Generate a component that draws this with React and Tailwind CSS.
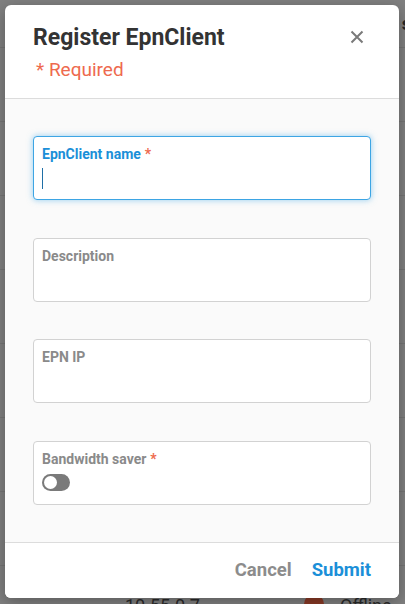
import { useState } from "react";

const rows = [0, 1, 2, 3, 4, 5, 6, 7];

const Field = ({ label, required, focused, children }) => (
  <div
    className={
      "relative flex h-[64px] flex-col rounded-[4px] border bg-white px-[8px] pt-[9px] " +
      (focused
        ? "border-[#3da5e4] shadow-[0_0_6px_rgba(61,165,228,0.55)]"
        : "border-[#d2d2d2]")
    }
  >
    <label
      className={
        "text-[14px] leading-[16px] font-bold " +
        (focused ? "text-[#1b8fd8]" : "text-[#8a8a8a]")
      }
    >
      {label}
      {required && <span className="ml-[4px] text-[#ee6a4e]">*</span>}
    </label>
    {children}
  </div>
);

const App = () => {
  const [name, setName] = useState("");
  const [desc, setDesc] = useState("");
  const [ip, setIp] = useState("");
  const [saver, setSaver] = useState(false);

  return (
    <div className="relative h-[604px] w-[405px] overflow-hidden bg-[#808080] font-['Roboto',_'Liberation_Sans',_sans-serif]">
      {/* page behind the overlay */}
      <div className="flex h-[48px] items-start justify-end border-b border-[#757575] pt-[10px]">
        <span className="mr-[-6px] text-[18px] font-bold text-[#262626]">s</span>
      </div>
      {rows.map((r) => (
        <div key={r} className="h-[74px] border-b border-[#757575]" />
      ))}
      <div className="absolute left-[125px] top-[592px] text-[18px] text-[#2b2b2b]">10.55.0.7</div>
      <div className="absolute left-[304px] top-[594px] h-[20px] w-[20px] rounded-full bg-[#8a3a26]" />
      <div className="absolute left-[340px] top-[592px] text-[18px] text-[#2b2b2b]">Offline</div>

      {/* dialog */}
      <div className="absolute left-[5px] top-[5px] flex h-[593px] w-[394px] flex-col overflow-hidden rounded-[6px] bg-white shadow-[0_4px_16px_rgba(0,0,0,0.3)]">
        <div className="flex h-[94px] shrink-0 flex-col border-b border-[#dcdcdc] px-[28px] pt-[18px]">
          <div className="flex items-start justify-between">
            <h2 className="text-[23px] leading-[30px] font-bold text-[#333333]">Register EpnClient</h2>
            <button className="mr-[7px] mt-[7px] text-[#7a7a7a]">
              <svg width="14" height="14" viewBox="0 0 14 14">
                <path d="M1.5 1.5L12.5 12.5M12.5 1.5L1.5 12.5" stroke="currentColor" strokeWidth="2" />
              </svg>
            </button>
          </div>
          <p className="mt-[6px] pl-[3px] text-[19px] leading-[22px] text-[#ee6a4e]">* Required</p>
        </div>

        <div className="flex flex-1 flex-col gap-[37.5px] bg-[#fafafa] px-[28px] pt-[37px]">
          <Field label="EpnClient name" required focused>
            <div className="mt-[6px] flex h-[21px] items-center">
              <span className="h-[21px] w-px shrink-0 bg-[#1f6fa6]" />
              <input
                value={name}
                onChange={(e) => setName(e.target.value)}
                className="h-[21px] w-full bg-transparent text-[15px] text-[#333] caret-[#1b6fa8] outline-none"
              />
            </div>
          </Field>
          <Field label="Description">
            <input
              value={desc}
              onChange={(e) => setDesc(e.target.value)}
              className="mt-[6px] h-[21px] w-full bg-transparent text-[15px] text-[#333] outline-none"
            />
          </Field>
          <Field label="EPN IP">
            <input
              value={ip}
              onChange={(e) => setIp(e.target.value)}
              className="mt-[6px] h-[21px] w-full bg-transparent text-[15px] text-[#333] outline-none"
            />
          </Field>
          <Field label="Bandwidth saver" required>
            <button
              onClick={() => setSaver(!saver)}
              className={
                "mt-[7px] flex h-[17px] w-[28px] items-center rounded-full px-[2px] " +
                (saver ? "justify-end bg-[#1b8fd8]" : "justify-start bg-[#7a7a7a]")
              }
            >
              <span className="h-[13px] w-[13px] rounded-full bg-white" />
            </button>
          </Field>
        </div>

        <div className="flex h-[56px] shrink-0 items-center justify-end gap-[20px] border-t border-[#dcdcdc] bg-white pr-[28px]">
          <button className="text-[18.5px] font-bold text-[#8c8c8c]">Cancel</button>
          <button className="text-[18.5px] font-bold text-[#1b8fd8]">Submit</button>
        </div>
      </div>
    </div>
  );
};

export default App;
